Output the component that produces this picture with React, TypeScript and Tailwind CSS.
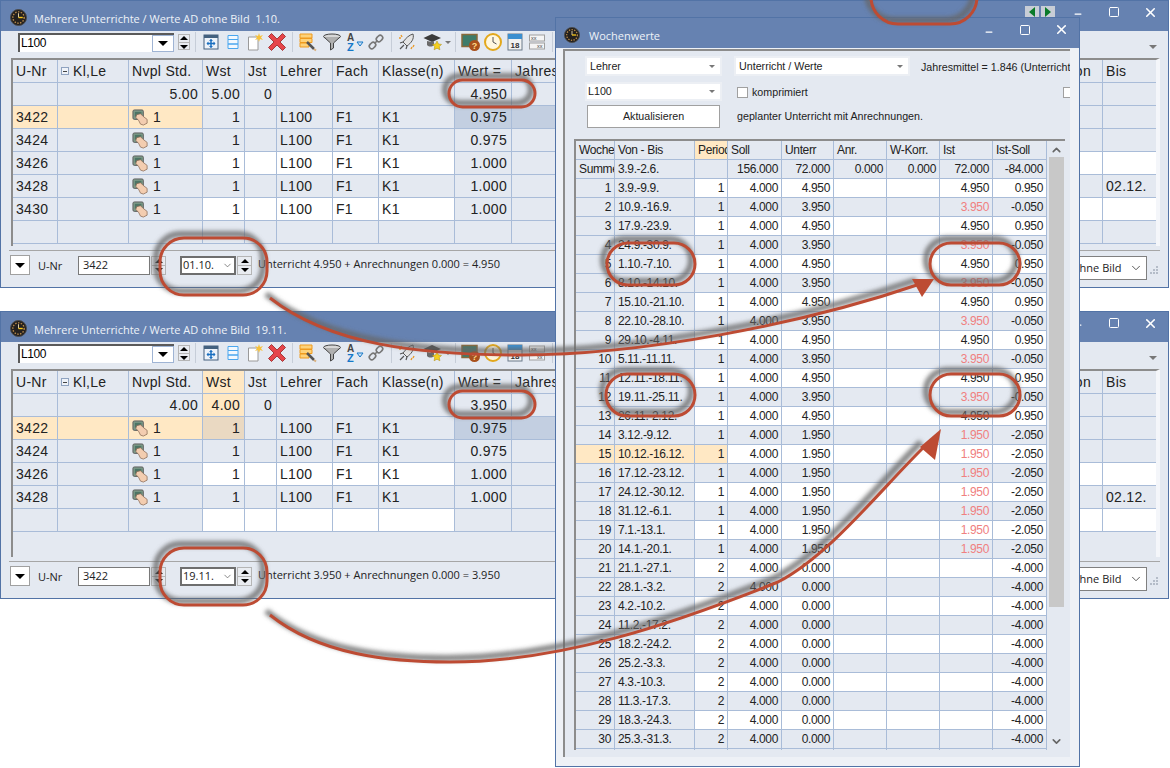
import { ChevronDown, ChevronUp, Minus, Square, X } from 'lucide-react';

const uiFont = "font-['Open_Sans',sans-serif]";

const mainCols = 'grid grid-cols-[45px_71px_74px_42px_32px_56px_46px_76px_57px_551px_40px_54px]';
const weekCols = 'grid grid-cols-[39px_80px_33px_54px_52px_53px_53px_53px_54px]';

const tones: Record<string, string> = {
  g: 'bg-[#e4e9f1]',
  w: 'bg-white',
  o: 'bg-[#ffe8c4]',
  b: 'bg-[#c3cfe1]',
  t: 'bg-[#ead9c2]',
};

function Clock({ className }: { className?: string }) {
  return (
    <svg viewBox="0 0 18 18" className={className}>
      <circle cx="9" cy="9" r="8.5" fill="#23201e" stroke="#4a4a4a" />
      <circle cx="9" cy="9" r="6" fill="none" stroke="#b98a4a" strokeWidth="1.5" strokeDasharray="1.5 1.5" />
      <path d="M9 9 L9 4.5" stroke="#e8d9b0" strokeWidth="1" />
      <path d="M9 9 L13.5 9" stroke="#f5c518" strokeWidth="1.5" />
    </svg>
  );
}

function Hand() {
  return (
    <svg viewBox="0 0 18 18" className="h-[17px] w-[17px] shrink-0">
      <rect x="1" y="1" width="11" height="10" rx="1.5" fill="#7d9a88" stroke="#5c5c5c" />
      <rect x="3" y="3" width="7" height="5" fill="#4d7565" />
      <path d="M5 6 L9 5 L12 8 L16 11 L16 15 L12 17 L9 16 L7 12 L4 9 Z" fill="#f3cdb0" stroke="#8a6a55" strokeWidth="0.8" />
    </svg>
  );
}

function ToolIcon({ name }: { name: string }) {
  const size = 'h-[20px] w-[20px]';
  switch (name) {
    case 'move':
      return (
        <svg viewBox="0 0 20 20" className={size}>
          <rect x="3" y="3" width="14" height="14" fill="#eef3fa" stroke="#44617f" />
          <rect x="3" y="3" width="14" height="3" fill="#44617f" />
          <path d="M10 7.5 V15.5 M6 11.5 H14" stroke="#1a6fc0" strokeWidth="1.5" />
          <path d="M10 7 l-2 2 h4 Z M10 16 l-2 -2 h4 Z M5.5 11.5 l2 -2 v4 Z M14.5 11.5 l-2 -2 v4 Z" fill="#1a6fc0" />
        </svg>
      );
    case 'rows':
      return (
        <svg viewBox="0 0 20 20" className={size}>
          <path d="M5 3.5 H15 V7.5 H5 Z M5 7.5 H15 V12 H5 Z M5 12 H15 V16.5 H5 Z" fill="#f2f8fe" stroke="#4aa6ee" />
        </svg>
      );
    case 'new':
      return (
        <svg viewBox="0 0 20 20" className={size}>
          <path d="M3.5 5 H13 V18 H3.5 Z" fill="#fff" stroke="#9a9a9a" />
          <path d="M14 1 l1 3 l3 -1 l-2 2.5 l2 2.5 l-3 -1 l-1 3 l-1 -3 l-3 1 l2 -2.5 l-2 -2.5 l3 1 Z" fill="#f7c23a" />
        </svg>
      );
    case 'del':
      return (
        <svg viewBox="0 0 20 20" className={size}>
          <path d="M4.5 1.5 L10 7 L15.5 1.5 L18.5 4.5 L13 10 L18.5 15.5 L15.5 18.5 L10 13 L4.5 18.5 L1.5 15.5 L7 10 L1.5 4.5 Z" fill="#e6454a" stroke="#a53a3a" />
        </svg>
      );
    case 'list':
      return (
        <svg viewBox="0 0 20 20" className={size}>
          <path d="M2 2 H14 V6 H2 Z M2 6.5 H14 V10.5 H2 Z M2 11 H11 V15 H2 Z" fill="#fdd27a" stroke="#ef9b1f" />
          <path d="M9 10 L16 17" stroke="#555" strokeWidth="2.5" />
          <path d="M16 17 L18 18.5" stroke="#d8b080" strokeWidth="2" />
        </svg>
      );
    case 'funnel':
      return (
        <svg viewBox="0 0 20 20" className={size}>
          <ellipse cx="10" cy="4.5" rx="8.5" ry="2.5" fill="#d8d8d8" stroke="#444" />
          <path d="M2 5 L8.5 11 V18 L11.5 16 V11 L18 5" fill="#b0b0b0" stroke="#444" />
        </svg>
      );
    case 'sort':
      return (
        <svg viewBox="0 0 20 20" className={size}>
          <text x="3" y="9" fontSize="10" fontWeight="700" fill="#444" fontFamily="Liberation Sans, sans-serif">A</text>
          <text x="3" y="19" fontSize="11" fontWeight="700" fill="#1478c8" fontFamily="Liberation Sans, sans-serif">Z</text>
          <path d="M13 10 H19 L16 14 Z" fill="#cfe2f5" stroke="#1478c8" />
        </svg>
      );
    case 'chain':
      return (
        <svg viewBox="0 0 20 20" className={size}>
          <g fill="none" stroke="#777" strokeWidth="1.6">
            <rect x="10" y="4" width="7" height="5" rx="2.5" transform="rotate(-45 13.5 6.5)" />
            <rect x="3" y="11" width="7" height="5" rx="2.5" transform="rotate(-45 6.5 13.5)" />
            <path d="M8.5 11.5 L11.5 8.5" />
          </g>
        </svg>
      );
    case 'rocket':
      return (
        <svg viewBox="0 0 20 20" className={size}>
          <path d="M16 2 C17.5 7 14 11 10 14 L6 10 C9 6 12 3 16 2 Z" fill="#e4e4e4" stroke="#555" />
          <path d="M6 10 L3 11 M10 14 L9 17 M7 13 L3 17" stroke="#555" strokeWidth="1.2" />
          <path d="M4 3 l1 2 M2 6 l2 0 M17 13 l-1 2 M14 17 l1 -2" stroke="#e99a2a" strokeWidth="1.4" />
        </svg>
      );
    case 'hat':
      return (
        <svg viewBox="0 0 20 20" className={size}>
          <path d="M0.5 6 L9 2 L18 6 L9 10 Z" fill="#3b3b3b" />
          <path d="M4 9 V13 C6 15 9 15 11 13 V9 L9 10 Z" fill="#6a6a6a" />
          <path d="M14 9 l1.5 3 l3 .4 l-2.2 2.2 l.6 3.2 l-2.9 -1.6 l-2.9 1.6 l.6 -3.2 l-2.2 -2.2 l3 -.4 Z" fill="#f5cf1e" stroke="#a88a10" strokeWidth="0.5" />
        </svg>
      );
    case 'board':
      return (
        <svg viewBox="0 0 20 20" className={size}>
          <rect x="1" y="2.5" width="15" height="12" fill="#3e7c6a" stroke="#8a6a3a" strokeWidth="1.5" />
          <circle cx="13.5" cy="13.5" r="5.5" fill="#a8501c" />
          <text x="13.5" y="17" textAnchor="middle" fontSize="9" fontWeight="700" fill="#ffd98a" fontFamily="Liberation Sans, sans-serif">?</text>
        </svg>
      );
    case 'clock':
      return (
        <svg viewBox="0 0 20 20" className={size}>
          <circle cx="10" cy="10" r="8" fill="#fff7df" stroke="#e3a81c" strokeWidth="2" />
          <path d="M10 5 V10 L13.5 12" fill="none" stroke="#555" strokeWidth="1" />
        </svg>
      );
    case 'cal':
      return (
        <svg viewBox="0 0 20 20" className={size}>
          <rect x="3" y="2" width="14" height="16" fill="#f2f2f2" stroke="#6a7a8a" />
          <rect x="3" y="2" width="14" height="5" fill="#3b8fd0" />
          <text x="10" y="16" textAnchor="middle" fontSize="8" fontWeight="700" fill="#333" fontFamily="Liberation Sans, sans-serif">18</text>
        </svg>
      );
    default:
      return (
        <svg viewBox="0 0 20 20" className={size}>
          <rect x="2.5" y="3" width="15" height="6" fill="#f5f5f5" stroke="#a0a0a0" />
          <rect x="2.5" y="11" width="15" height="6" fill="#f5f5f5" stroke="#a0a0a0" />
          <text x="4" y="8" fontSize="5.5" fill="#444" fontFamily="Liberation Sans, sans-serif">xx</text>
          <text x="10" y="16" fontSize="5.5" fill="#444" fontFamily="Liberation Sans, sans-serif">xx</text>
        </svg>
      );
  }
}

function Spin({ className }: { className?: string }) {
  return (
    <div className={`flex flex-col items-center justify-center gap-[2px] border border-[#b5b5b5] bg-[#e9ecf1] ${className}`}>
      <span className="h-0 w-0 border-x-[4px] border-b-[4px] border-x-transparent border-b-black" />
      <span className="h-px w-full bg-[#b5b5b5]" />
      <span className="h-0 w-0 border-x-[4px] border-t-[4px] border-x-transparent border-t-black" />
    </div>
  );
}

function Sep() {
  return <div className="mx-[4px] h-[20px] w-px shrink-0 bg-[#c6cdd8]" />;
}

function Tool({ name }: { name: string }) {
  return (
    <div className="flex h-[20px] w-[22px] shrink-0 items-center justify-center">
      <ToolIcon name={name} />
    </div>
  );
}

function TitleButtons() {
  return (
    <div className="flex items-center text-white">
      <div className="flex w-[36px] justify-center pt-[4px]"><Minus size={10} strokeWidth={3} /></div>
      <div className="flex w-[36px] justify-center"><Square size={12} strokeWidth={2} /></div>
      <div className="flex w-[36px] justify-center"><X size={15} strokeWidth={2.5} /></div>
    </div>
  );
}

function MainCell({ tone = 'g', right, children }: { tone?: string; right?: boolean; children?: React.ReactNode }) {
  return (
    <div className={`flex h-[23px] items-center overflow-hidden whitespace-nowrap border-b border-r border-[#a9bcd8] pl-[3px] pr-[4px] ${right ? 'justify-end' : ''} ${tones[tone]}`}>
      {children}
    </div>
  );
}

type MainRow = { nr: string; wert: string; white?: boolean; selected?: boolean; bis?: string };

function PlanWindow({ pos, title, date, sum, wert, total, wstActive, rows, nav }: {
  pos: string; title: string; date: string; sum: string; wert: string; total: string;
  wstActive?: boolean; rows: MainRow[]; nav?: boolean;
}) {
  const headers = ['U-Nr', '', 'Nvpl Std.', 'Wst', 'Jst', 'Lehrer', 'Fach', 'Klasse(n)', 'Wert =', 'Jahres', 'Von', 'Bis'];
  return (
    <div className={`absolute left-0 flex h-[288px] w-[1169px] flex-col border border-[#5273a6] bg-[#e4e9f1] ${pos}`}>
      <div className={`flex h-[30px] shrink-0 items-center bg-[#6682b1] pl-[9px] text-[11px] text-[#eef2f8] ${uiFont}`}>
        <Clock className="mt-[3px] h-[17px] w-[17px]" />
        <span className="ml-[7px] mt-[6px] whitespace-pre">{title}</span>
        <div className="mb-[8px] ml-auto flex items-center">
          {nav && (
            <div className="mr-[5px] flex gap-[2px]">
              <div className="flex h-[13px] w-[14px] items-center justify-center bg-[#c8cdd6]"><span className="h-0 w-0 border-y-[5px] border-r-[6px] border-y-transparent border-r-[#0a7a2a]" /></div>
              <div className="flex h-[13px] w-[14px] items-center justify-center bg-[#c8cdd6]"><span className="h-0 w-0 border-y-[5px] border-l-[6px] border-y-transparent border-l-[#0a7a2a]" /></div>
            </div>
          )}
          <TitleButtons />
        </div>
      </div>

      <div className="flex h-[27px] shrink-0 items-center pb-[5px] pl-[17px]">
        <div className="flex h-[19px] w-[156px] items-stretch border-l-2 border-t-2 border-[#5a5a5a] bg-white">
          <span className="flex-1 pl-[1px] text-[12px] leading-[16px] tracking-[-0.4px] font-['Liberation_Sans',sans-serif] text-black">L100</span>
          <div className="flex w-[22px] items-center justify-center border border-[#9fb4d4]">
            <span className="h-0 w-0 border-x-[5px] border-t-[5px] border-x-transparent border-t-black" />
          </div>
        </div>
        <Spin className="ml-[4px] h-[16px] w-[12px]" />
        <div className="ml-[1px]"><Sep /></div>
        <Tool name="move" /><Tool name="rows" /><Tool name="new" /><Tool name="del" />
        <Sep />
        <Tool name="list" /><div className="w-[2px]" /><Tool name="funnel" /><Tool name="sort" /><Tool name="chain" />
        <Sep />
        <Tool name="rocket" /><div className="w-[4px]" /><Tool name="hat" />
        <span className="ml-[1px] h-0 w-0 border-x-[3px] border-t-[3px] border-x-transparent border-t-[#777]" />
        <Sep />
        <Tool name="board" /><Tool name="clock" /><Tool name="cal" /><Tool name="xx" />
        <Sep />
        <span className="ml-auto mr-[11px] mt-[9px] h-0 w-0 border-x-[4px] border-t-[4px] border-x-transparent border-t-[#777]" />
      </div>

      <div className="ml-[10px] h-[188px] w-[1149px] shrink-0 overflow-hidden border-l-2 border-r-4 border-t-2 border-[#8c8c8c] border-r-[#f4f6fa] font-['Liberation_Sans',sans-serif] text-[14px] tracking-[0.3px] text-[#222]">
        <div className={mainCols}>
          {headers.map((h, i) => (
            <MainCell key={i} tone={wstActive && h === 'Wst' ? 'o' : 'g'}>
              {i === 1 ? (
                <>
                  <span className="mr-[4px] flex h-[8px] w-[8px] items-center justify-center border border-[#8fa3c0] bg-[#eef2f8]"><span className="h-px w-[4px] bg-[#444]" /></span>
                  Kl,Le
                </>
              ) : h}
            </MainCell>
          ))}
        </div>
        <div className={mainCols}>
          <MainCell /><MainCell />
          <MainCell right>{sum}</MainCell>
          <MainCell right tone={wstActive ? 'o' : 'g'}>{sum}</MainCell>
          <MainCell right>0</MainCell>
          <MainCell /><MainCell /><MainCell />
          <MainCell right>{wert}</MainCell>
          <MainCell /><MainCell /><MainCell />
        </div>
        {rows.map((r, i) => {
          const edit = r.white ? 'w' : 'g';
          const empty = !r.nr;
          return (
            <div key={i} className={mainCols}>
              <MainCell tone={r.selected ? 'o' : 'g'}>{r.nr}</MainCell>
              <MainCell tone={r.selected ? 'o' : 'g'} />
              <MainCell tone={r.selected ? 'o' : 'g'}>
                {!empty && <><Hand /><span className="ml-[4px]">1</span></>}
              </MainCell>
              <MainCell right tone={r.selected && wstActive ? 't' : edit}>{!empty && '1'}</MainCell>
              <MainCell tone={edit} />
              <MainCell tone={edit}>{!empty && 'L100'}</MainCell>
              <MainCell tone={edit}>{!empty && 'F1'}</MainCell>
              <MainCell tone={edit}>{!empty && 'K1'}</MainCell>
              <MainCell right tone={r.selected ? 'b' : 'g'}>{r.wert}</MainCell>
              <MainCell tone={r.selected ? 'b' : 'g'} />
              <MainCell tone={edit} />
              <MainCell tone={edit}>{r.bis}</MainCell>
            </div>
          );
        })}
      </div>

      <div className="mx-[8px] mt-[4px] h-px shrink-0 bg-[#a6a6a6]" />

      <div className={`flex min-h-0 flex-1 items-start pl-[9px] pt-[4px] text-[11px] text-[#222] ${uiFont}`}>
        <div className="flex h-[20px] w-[20px] items-center justify-center border border-[#a0a0a0] bg-white">
          <span className="h-0 w-0 border-x-[5px] border-t-[5px] border-x-transparent border-t-black" />
        </div>
        <span className="ml-[8px] mt-[3px] w-[40px]">U-Nr</span>
        <div className="mt-[1px] flex h-[19px] w-[72px] items-center border border-[#7a7a7a] bg-white pl-[4px]">3422</div>
        <Spin className="ml-px mt-[1px] h-[19px] w-[15px]" />
        <div className="ml-[14px] mt-[1px] flex h-[19px] w-[56px] items-center justify-between border-2 border-[#6e6e6e] bg-white pl-[1px] pr-[1px]">
          {date}
          <ChevronDown size={11} strokeWidth={1.5} className="text-[#555]" />
        </div>
        <Spin className="ml-px mt-[1px] h-[19px] w-[15px]" />
        <span className="ml-[6px] mt-[1px]">{total}</span>
        <div className="ml-auto mt-[1px] flex h-[24px] w-[90px] items-center justify-between border border-[#808080] bg-white pl-[15px] pr-[3px]">
          ohne Bild
          <ChevronDown size={14} strokeWidth={1.5} className="text-[#444]" />
        </div>
        <svg viewBox="0 0 9 9" className="ml-[3px] mr-[9px] mt-[11px] h-[9px] w-[9px]">
          <g fill="#b4bcc8">
            <rect x="6" y="0" width="2" height="2" />
            <rect x="3" y="3" width="2" height="2" />
            <rect x="6" y="3" width="2" height="2" />
            <rect x="0" y="6" width="2" height="2" />
            <rect x="3" y="6" width="2" height="2" />
            <rect x="6" y="6" width="2" height="2" />
          </g>
        </svg>
      </div>
    </div>
  );
}

type Week = { w: number; d: string; p: number; u: string; ist: string; diff: string };

const weekDates = [
  '3.9.-9.9.', '10.9.-16.9.', '17.9.-23.9.', '24.9.-30.9.', '1.10.-7.10.', '8.10.-14.10.', '15.10.-21.10.', '22.10.-28.10.',
  '29.10.-4.11.', '5.11.-11.11.', '12.11.-18.11.', '19.11.-25.11.', '26.11.-2.12.', '3.12.-9.12.', '10.12.-16.12.', '17.12.-23.12.',
  '24.12.-30.12.', '31.12.-6.1.', '7.1.-13.1.', '14.1.-20.1.', '21.1.-27.1.', '28.1.-3.2.', '4.2.-10.2.', '11.2.-17.2.',
  '18.2.-24.2.', '25.2.-3.3.', '4.3.-10.3.', '11.3.-17.3.', '18.3.-24.3.', '25.3.-31.3.',
];

const weeks: Week[] = weekDates.map((d, i) => {
  const w = i + 1;
  if (w > 20) return { w, d, p: 2, u: '0.000', ist: '', diff: '-4.000' };
  if (w > 13) return { w, d, p: 1, u: '1.950', ist: '1.950', diff: '-2.050' };
  const odd = w % 2 === 1;
  return { w, d, p: 1, u: odd ? '4.950' : '3.950', ist: odd ? '4.950' : '3.950', diff: odd ? '0.950' : '-0.050' };
});

function WeekCell({ tone = 'g', right, className, children }: { tone?: string; right?: boolean; className?: string; children?: React.ReactNode }) {
  return (
    <div className={`flex h-[19px] items-center overflow-hidden whitespace-nowrap border-b border-r border-[#a9bcd8] px-[3px] ${right ? 'justify-end' : ''} ${tones[tone]} ${className ?? ''}`}>
      {children}
    </div>
  );
}

function SelectBox({ label, className }: { label: string; className: string }) {
  return (
    <div className={`flex items-center justify-between border-2 border-[#eceff4] bg-white pl-[3px] pr-[5px] ${className}`}>
      {label}
      <span className="h-0 w-0 border-x-[3px] border-t-[3px] border-x-transparent border-t-[#777]" />
    </div>
  );
}

function WeekWindow() {
  return (
    <div className="absolute left-[555px] top-[17px] flex h-[750px] w-[525px] flex-col border border-[#5273a6] bg-[#eef1f6]">
      <div className={`flex h-[30px] shrink-0 items-center bg-[#6682b1] pl-[8px] text-[11px] text-[#eef2f8] ${uiFont}`}>
        <Clock className="mt-[3px] h-[16px] w-[16px]" />
        <span className="ml-[9px] mt-[7px]">Wochenwerte</span>
        <div className="mb-[7px] ml-auto"><TitleButtons /></div>
      </div>
      <div className="ml-[7px] mt-[1px] flex h-[708px] w-[507px] flex-col border-l-2 border-t-2 border-[#8c8c8c] bg-[#e4e9f1] text-[#222]">
        <div className="flex h-[88px] shrink-0 pt-[5px] font-['Liberation_Sans',sans-serif] text-[10.7px]">
          <div className="ml-[20px] flex w-[137px] flex-col">
            <SelectBox label="Lehrer" className="h-[20px]" />
            <SelectBox label="L100" className="mt-[6px] h-[19px] pl-px" />
            <button className="mx-[2px] mt-[4px] h-[23px] border border-[#a0a0a0] bg-white">Aktualisieren</button>
          </div>
          <div className="ml-[12px] flex min-w-0 flex-1 flex-col overflow-hidden">
            <div className="flex h-[20px] items-center">
              <SelectBox label="Unterricht / Werte" className="h-[20px] w-[176px] shrink-0" />
              <span className="ml-[11px] mt-[3px] whitespace-nowrap">Jahresmittel = 1.846 (Unterricht</span>
            </div>
            <div className="mt-[7px] flex h-[19px] items-center pl-[3px]">
              <span className="h-[11px] w-[11px] border border-[#a0a0a0] bg-white" />
              <span className="ml-[4px]">komprimiert</span>
              <span className="ml-auto h-[11px] w-[7px] shrink-0 border border-r-0 border-[#a0a0a0] bg-white" />
            </div>
            <div className="mt-[6px] pl-[3px]">geplanter Unterricht mit Anrechnungen.</div>
          </div>
        </div>

        <div className="ml-[9px] flex h-[611px] w-[491px] shrink-0 border-l-2 border-t-2 border-[#8c8c8c] font-['Liberation_Sans',sans-serif] text-[12px] tracking-[-0.35px]">
          <div className="h-full w-[471px] shrink-0 overflow-hidden">
            <div className={weekCols}>
              <WeekCell>Woche</WeekCell>
              <WeekCell>Von - Bis</WeekCell>
              <WeekCell tone="o">Period</WeekCell>
              <WeekCell>Soll</WeekCell>
              <WeekCell>Unterr</WeekCell>
              <WeekCell>Anr.</WeekCell>
              <WeekCell>W-Korr.</WeekCell>
              <WeekCell>Ist</WeekCell>
              <WeekCell>Ist-Soll</WeekCell>
            </div>
            <div className={weekCols}>
              <WeekCell>Summe</WeekCell>
              <WeekCell>3.9.-2.6.</WeekCell>
              <WeekCell />
              <WeekCell right>156.000</WeekCell>
              <WeekCell right>72.000</WeekCell>
              <WeekCell right>0.000</WeekCell>
              <WeekCell right>0.000</WeekCell>
              <WeekCell right>72.000</WeekCell>
              <WeekCell right>-84.000</WeekCell>
            </div>
            {weeks.map((r) => {
              const tone = r.w % 2 === 1 ? 'w' : 'g';
              const active = r.w === 15;
              const red = r.ist !== '' && r.ist !== '4.950';
              return (
                <div key={r.w} className={weekCols}>
                  <WeekCell right tone={active ? 'o' : 'g'}>{r.w}</WeekCell>
                  <WeekCell tone={active ? 'o' : 'g'}>{r.d}</WeekCell>
                  <WeekCell right tone={active ? 'o' : tone}>{r.p}</WeekCell>
                  <WeekCell right tone={tone}>4.000</WeekCell>
                  <WeekCell right tone={tone}>{r.u}</WeekCell>
                  <WeekCell tone={tone} />
                  <WeekCell tone={tone} />
                  <WeekCell right tone={tone} className={red ? 'text-[#f08080]' : ''}>{r.ist}</WeekCell>
                  <WeekCell right tone={tone}>{r.diff}</WeekCell>
                </div>
              );
            })}
            <div className={weekCols}>
              {Array.from({ length: 9 }, (_, i) => <WeekCell key={i} />)}
            </div>
          </div>
          <div className="ml-[2px] flex h-[607px] w-[15px] flex-col items-center">
            <ChevronUp size={13} strokeWidth={3} className="mt-[2px] h-[14px] text-[#666]" />
            <div className="h-[450px] w-full bg-[#c8c8c8]" />
            <ChevronDown size={13} strokeWidth={3} className="mt-auto text-[#666]" />
          </div>
        </div>
      </div>
    </div>
  );
}

function Marks() {
  const shapes = (
    <>
      <rect x="871" y="-30" width="106" height="54" rx="27" />
      <rect x="449" y="80" width="86" height="27" rx="13.5" />
      <rect x="449" y="391" width="86" height="27" rx="13.5" />
      <rect x="160" y="238" width="107" height="57" rx="24" />
      <rect x="160" y="548" width="107" height="57" rx="24" />
      <rect x="930" y="243" width="90" height="42" rx="21" />
      <rect x="930" y="374" width="90" height="42" rx="21" />
      <rect x="607" y="243" width="88" height="42" rx="21" />
      <rect x="606" y="374" width="89" height="42" rx="21" />
      <path d="M270 298 C330 345 420 355 520 355 C640 355 800 325 920 284" />
      <path d="M270 615 C320 655 390 662 450 662 C560 662 670 625 778 582 C830 555 880 490 925 446" />
    </>
  );
  return (
    <svg viewBox="0 0 1170 768" className="pointer-events-none absolute left-0 top-0 z-50 h-[768px] w-[1170px]">
      <defs>
        <filter id="soft" x="-10%" y="-10%" width="120%" height="120%">
          <feGaussianBlur stdDeviation="2.2" />
        </filter>
      </defs>
      <g fill="none" stroke="#666" strokeOpacity="0.8" strokeWidth="6" filter="url(#soft)" transform="translate(-4 -4)">
        {shapes}
      </g>
      <g fill="none" stroke="#bd4b33" strokeWidth="3">
        {shapes}
      </g>
      <polygon points="934,279 912,279 922,297" fill="#bd4b33" />
      <polygon points="941,429 920,447 935,460" fill="#bd4b33" />
    </svg>
  );
}

export default function App() {
  return (
    <div className="relative h-[768px] w-[1170px] overflow-hidden bg-white">
      <PlanWindow
        pos="top-0"
        title="Mehrere Unterrichte / Werte AD ohne Bild  1.10."
        date="01.10."
        sum="5.00"
        wert="4.950"
        total="Unterricht 4.950 + Anrechnungen 0.000 = 4.950"
        nav
        rows={[
          { nr: '3422', wert: '0.975', selected: true },
          { nr: '3424', wert: '0.975' },
          { nr: '3426', wert: '1.000', white: true },
          { nr: '3428', wert: '1.000', bis: '02.12.' },
          { nr: '3430', wert: '1.000', white: true },
          { nr: '', wert: '' },
        ]}
      />
      <PlanWindow
        pos="top-[311px]"
        title="Mehrere Unterrichte / Werte AD ohne Bild  19.11."
        date="19.11."
        sum="4.00"
        wert="3.950"
        total="Unterricht 3.950 + Anrechnungen 0.000 = 3.950"
        wstActive
        rows={[
          { nr: '3422', wert: '0.975', selected: true },
          { nr: '3424', wert: '0.975' },
          { nr: '3426', wert: '1.000', white: true },
          { nr: '3428', wert: '1.000', bis: '02.12.' },
          { nr: '', wert: '', white: true },
        ]}
      />
      <WeekWindow />
      <Marks />
    </div>
  );
}
